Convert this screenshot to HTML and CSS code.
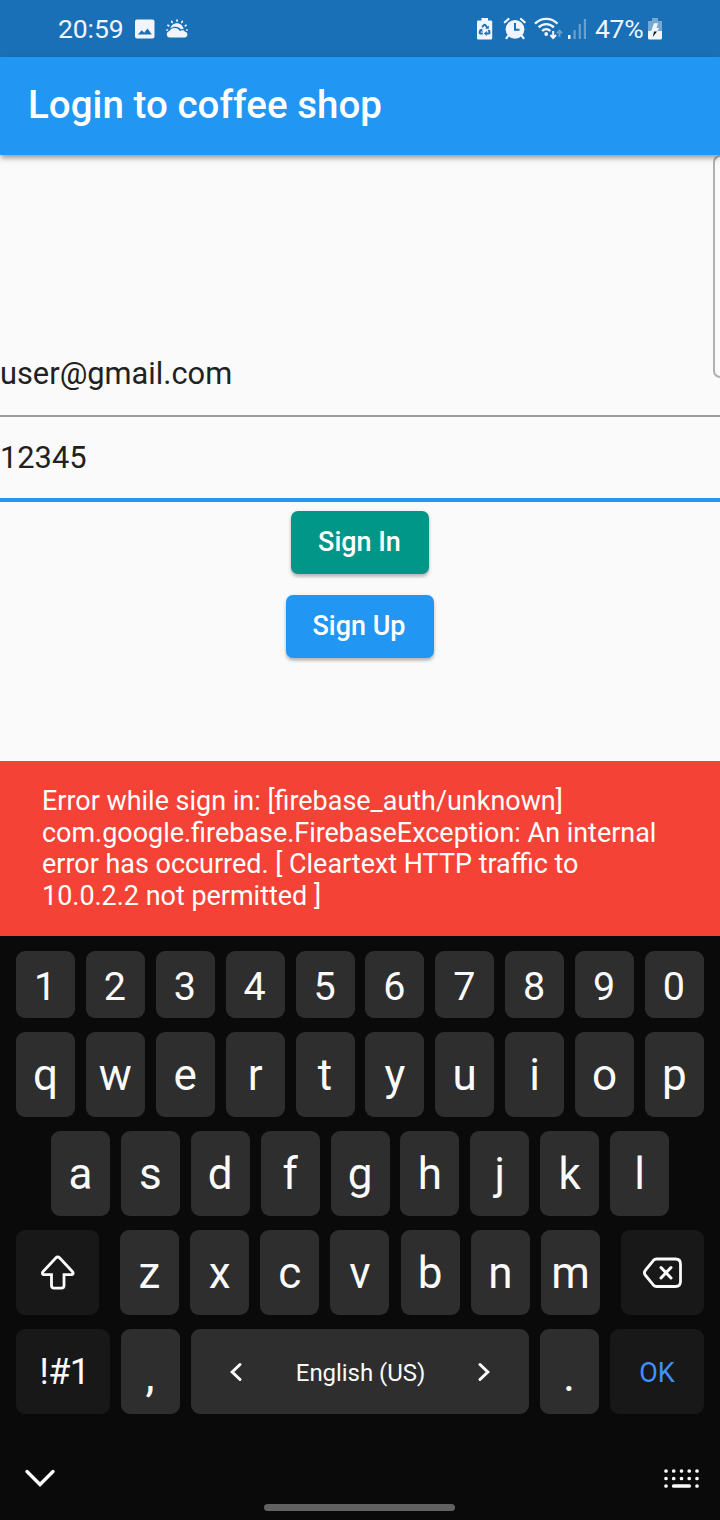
FILE: index.html
```html
<!DOCTYPE html>
<html lang="en">
<head>
<meta charset="utf-8">
<title>Login to coffee shop</title>
<link rel="stylesheet" href="styles.css">
</head>
<body>
<div class="screen">
  <header class="status">
    <span class="clock">20:59</span>
    <svg class="ic-photo" width="20" height="20" viewBox="0 0 20 20"><path fill="#f1f5ff" fill-rule="evenodd" d="M2 0.5h15.500a2 2 0 0 1 2 2v15a2 2 0 0 1-2 2H2a2 2 0 0 1-2-2v-15a2 2 0 0 1 2-2zM2.800 15.500h14L12.500 9.500l-3.300 4.300-2.400-2.500z"/></svg>
    <svg class="ic-weather" width="22" height="20" viewBox="0 0 22 20"><g fill="none" stroke="#f1f5ff" stroke-width="1.700" stroke-linecap="round"><path d="M11 1v1M5.700 2.500l.5.900M16.300 2.500l-.5.900M1.900 6.300l.8.500M20.100 6.300l-.8.500M.9 11h.5M20.700 11h.4"/></g><path fill="#f1f5ff" d="M4.300 9.700C5 6.500 7.800 4.300 11 4.300s6 2.200 6.700 5.900c-1-.2-1.900-.1-2.700.3C13.600 8.500 11.800 7.700 9.500 7.700c-2 0-3.800.6-5.200 2z"/><path fill="#f1f5ff" d="M3.800 18.500c-4-.2-4-6-.3-6.600C4.700 9.900 6.700 8.800 9.200 9c2.200.2 3.800 1.500 4.800 3.200 1.500-1.400 4-1.200 4.900.5 3.500.3 3.300 5.500-.2 5.800z"/></svg>
    <span class="spacer"></span>
    <svg class="ic-saver" width="16" height="22" viewBox="0 0 16 22"><path fill="#f1f5ff" d="M4.500 0h6.500v2.500h3a1.200 1.200 0 0 1 1.200 1.200v16.600a1.200 1.200 0 0 1-1.200 1.200H1.200A1.200 1.200 0 0 1 0 20.300V3.700a1.200 1.200 0 0 1 1.200-1.200h3.300z"/><path d="M5.200 9.300 6.600 7.300q1-1 2 0l1.600 2.300M11.500 11.800l1 2q.4 1.700-1 1.700H9.600M5.800 15.500H3.700q-1.600-.2-.9-1.700l1-2" fill="none" stroke="#1a70b7" stroke-width="1.900"/><path fill="#1a70b7" d="M8.300 10.800h3.500V7.500zM9.800 12.900v5.200l-2.900-2.600zM1.800 12.300l3.400-1.900.4 3.500z"/></svg>
    <svg class="ic-alarm" width="24" height="24" viewBox="0 0 24 24"><circle cx="12" cy="12.300" r="9.400" fill="#f1f5ff"/><path d="M1.800 5.300 5.500 2M21.700 5.300 18 2M5.300 18.700l-1.800 2.500M18.700 18.700l1.800 2.500" fill="none" stroke="#f1f5ff" stroke-width="2.200" stroke-linecap="round"/><path d="M12 6v6.700h4.500" fill="none" stroke="#1a70b7" stroke-width="2"/></svg>
    <svg class="ic-wifi" width="29" height="23" viewBox="0 0 29 23"><g fill="none" stroke="#f1f5ff" stroke-width="2.400"><path d="M1 6.700C7.500.300 17 .300 23.500 6.700M4.600 10.400c4.500-4.400 10.800-4.400 15.300 0M8.100 14c2.500-2.400 5.800-2.400 8.300 0"/></g><circle cx="12.200" cy="17" r="1.900" fill="#f1f5ff"/><path d="M19.200 14v7M16.400 18l2.800 3 2.800-3" fill="none" stroke="#f1f5ff" stroke-width="2"/><path d="M25.500 20v-6.500M22.900 16.300l2.600-2.700 2.600 2.700" fill="none" stroke="#69a0ce" stroke-width="1.800"/></svg>
    <svg class="ic-signal" width="19" height="21" viewBox="0 0 19 21"><path fill="#f1f5ff" d="M0 16h2.500v4H0z"/><path fill="#69a0ce" d="M5.500 11H7.700v9H5.500zM10.700 5h2.200v15h-2.200zM15.800 0h2.200v20h-2.200z"/></svg>
    <span class="percent">47%</span>
    <svg class="ic-battery" width="15" height="22" viewBox="0 0 15 22"><path fill="#75a9d4" d="M4 0h6v3H14v10H0V3h4z"/><path fill="#f1f5ff" d="M0 13h14v7a1.500 1.500 0 0 1-1.500 1.500h-11A1.500 1.500 0 0 1 0 20z"/><path fill="#f1f5ff" d="M6 5.200H10L8.500 10h2.800L8.900 13.500H3z"/><path fill="#111b27" d="M6 13.500h3L4.800 19z"/></svg>
  </header>
  <div class="appbar"><h1>Login to coffee shop</h1></div>
  <main class="body">
    <div class="clip"><div class="outline"></div></div>
    <div class="field"><span>user@gmail.com</span></div>
    <div class="field focused"><span class="digits">12345</span></div>
    <div class="btn signin">Sign In</div>
    <div class="btn signup">Sign Up</div>
  </main>
  <div class="snackbar">Error while sign in: [firebase_auth/unknown]<br>com.google.firebase.FirebaseException: An internal<br>error has occurred. [ Cleartext HTTP traffic to<br>10.0.2.2 not permitted ]</div>
  <section class="keyboard">
    <div class="row nums"><div class="key">1</div><div class="key">2</div><div class="key">3</div><div class="key">4</div><div class="key">5</div><div class="key">6</div><div class="key">7</div><div class="key">8</div><div class="key">9</div><div class="key">0</div></div>
    <div class="row"><div class="key">q</div><div class="key">w</div><div class="key">e</div><div class="key">r</div><div class="key">t</div><div class="key">y</div><div class="key">u</div><div class="key">i</div><div class="key">o</div><div class="key">p</div></div>
    <div class="row home"><div class="key">a</div><div class="key">s</div><div class="key">d</div><div class="key">f</div><div class="key">g</div><div class="key">h</div><div class="key">j</div><div class="key">k</div><div class="key">l</div></div>
    <div class="row">
      <div class="key fn"><svg width="34" height="36" viewBox="0 0 34 36"><path d="M15 2.800 2.200 16.500c-1.500 1.600-.8 3.200 1 3.200h7.300v10.800c0 1.700 1 2.700 2.700 2.700h7.100c1.700 0 2.700-1 2.700-2.700V19.700h7.300c1.800 0 2.500-1.600 1-3.200L18.500 2.800c-1-1.100-2.500-1.100-3.500 0z" fill="none" stroke="#fafafa" stroke-width="2.800"/></svg></div>
      <div class="group"><div class="key">z</div><div class="key">x</div><div class="key">c</div><div class="key">v</div><div class="key">b</div><div class="key">n</div><div class="key">m</div></div>
      <div class="key fn"><svg width="40" height="32" viewBox="0 0 40 32"><path d="M13.500 2H32.500c3.200 0 5 1.800 5 5v17.500c0 3.200-1.800 5-5 5H13.500c-1.300 0-2.200-.4-3-1.300L2.600 18.500c-1.500-1.700-1.500-3.800 0-5.500l7.900-9.700c.8-.9 1.700-1.300 3-1.300z" fill="none" stroke="#fafafa" stroke-width="2.800"/><path d="M18 10.500l10 10.500M28 10.500l-10 10.500" stroke="#fafafa" stroke-width="3" stroke-linecap="round"/></svg></div>
    </div>
    <div class="row">
      <div class="key sym num-sym">!#1</div><div class="key punct">,</div>
      <div class="key space"><svg width="12" height="20" viewBox="0 0 12 20"><path d="M10 2.500 2.200 10l7.800 7.500" fill="none" stroke="#fafafa" stroke-width="3" stroke-linecap="round"/></svg><span>English (US)</span><svg width="12" height="20" viewBox="0 0 12 20"><path d="M2 2.500 9.800 10 2 17.500" fill="none" stroke="#fafafa" stroke-width="3" stroke-linecap="round"/></svg></div>
      <div class="key punct">.</div><div class="key sym ok">OK</div>
    </div>
    <div class="nav">
      <svg width="32" height="20" viewBox="0 0 32 20"><path d="M3 2.500l13 13 13-13" fill="none" stroke="#fafafa" stroke-width="3.400" stroke-linecap="round"/></svg>
      <svg width="36" height="21" viewBox="0 0 36 21"><path d="M2 2h.01M9.700 2h.01M17.500 2h.01M25.200 2h.01M33 2h.01M2 9.500h.01M9.700 9.500h.01M17.500 9.500h.01M25.200 9.500h.01M33 9.500h.01M2 17h.01M33 17h.01M9.700 17h15.500" stroke="#fafafa" stroke-width="3.700" stroke-linecap="round"/></svg>
    </div>
    <div class="pill"></div>
  </section>
</div>
</body>
</html>
```
FILE: styles.css
```css
* { box-sizing: border-box; }
body { margin: 0; background: #fafafa; font-family: Roboto, "Liberation Sans", sans-serif; }
.screen { width: 720px; height: 1520px; display: flex; flex-direction: column; overflow: hidden; }
.screen > * { flex-shrink: 0; }
svg { display: block; flex-shrink: 0; }

.status { height: 57px; background: #1a70b7; color: #f1f5ff; display: flex; align-items: flex-start; padding: 0 57px 0 58px; font-size: 26.5px; line-height: 32px; }
.status span { margin-top: 13px; white-space: nowrap; }
.clock { width: 77px; letter-spacing: -0.1px; }
.ic-photo { margin-top: 19px; }
.ic-weather { margin: 19px 0 0 11px; }
.spacer { flex: 1; }
.ic-saver { margin-top: 18px; }
.ic-alarm { margin: 17px 0 0 10px; }
.ic-wifi { margin: 17px 0 0 7px; }
.ic-signal { margin: 19px 0 0 5px; }
.percent { width: 53px; margin-left: 8px; letter-spacing: -0.3px; }
.ic-battery { margin-top: 18px; }

.appbar { height: 98px; background: #2196f3; padding: 0 28px 2px; display: flex; align-items: center; position: relative; z-index: 1; box-shadow: 0 3px 7px rgba(0,0,0,.2), 0 4px 4px -1px rgba(0,0,0,.22); }
.appbar h1 { margin: 0; color: #fff; font-size: 38.5px; font-weight: 500; line-height: 46px; white-space: nowrap; letter-spacing: 0.04px; }

.body { height: 606px; display: flex; flex-direction: column; align-items: center; }
.clip { width: 720px; height: 178px; display: flex; justify-content: flex-end; }
.outline { width: 7px; height: 223px; border: 2px solid #b0b0b0; border-right: 0; border-radius: 7px 0 0 7px; }
.field { width: 720px; height: 84px; display: flex; align-items: center; border-bottom: 2px solid #9b9b9b; font-size: 30.8px; line-height: 36px; color: #212121; }
.field span { margin-top: -1px; }
.field.focused { height: 85px; border-bottom: 4px solid #2196f3; }
.field.focused span { margin-top: 0; }
.btn { height: 63px; padding: 0 2px 2px 0; border-radius: 7px; color: #fff; font-size: 26.95px; font-weight: 500; display: flex; align-items: center; justify-content: center; box-shadow: 0 3px 3px rgba(0,0,0,.2), 0 1px 4px rgba(0,0,0,.12); }
.signin { width: 138px; padding-right: 1px; margin-top: 9px; background: #009688; }
.signup { width: 148px; margin-top: 21px; background: #2196f3; }

.snackbar { height: 175px; background: #f44336; color: #fff; padding: 25px 42px; font-size: 26.95px; line-height: 31.6px; white-space: nowrap; }

.keyboard { height: 584px; background: #0a0a0a; padding: 15px 16px 0; display: flex; flex-direction: column; gap: 14px; }
.row { height: 85px; display: flex; justify-content: space-between; }
.nums { height: 67px; }
.home { padding: 0 35px; }
.group { width: 480px; display: flex; justify-content: space-between; }
.key { width: 59px; border-radius: 9px; background: #2e2e2e; color: #fafafa; font-size: 44px; display: flex; align-items: center; justify-content: center; }
.nums .key { font-size: 39.5px; padding: 4px 1px 0 0; }
.fn { width: 83px; background: #181818; }
.sym { width: 94px; background: #181818; font-size: 36px; }
.num-sym { padding: 1px 0 0 3px; letter-spacing: -0.6px; }
.ok { color: #3e91ff; font-size: 27px; padding-top: 3px; }
.punct { padding: 6px 1px 0 0; font-size: 46px; }
.space { width: 338px; justify-content: space-between; padding: 0 39px; font-size: 24px; }
.space span { padding: 2px 0 0 1px; letter-spacing: -0.05px; }
.nav { display: flex; justify-content: space-between; margin: 41px -12px 0 -8px; padding: 0 16px; height: 21px; }
.pill { width: 191px; height: 7px; border-radius: 4px; background: #616161; align-self: center; margin-right: 1px; }
```
